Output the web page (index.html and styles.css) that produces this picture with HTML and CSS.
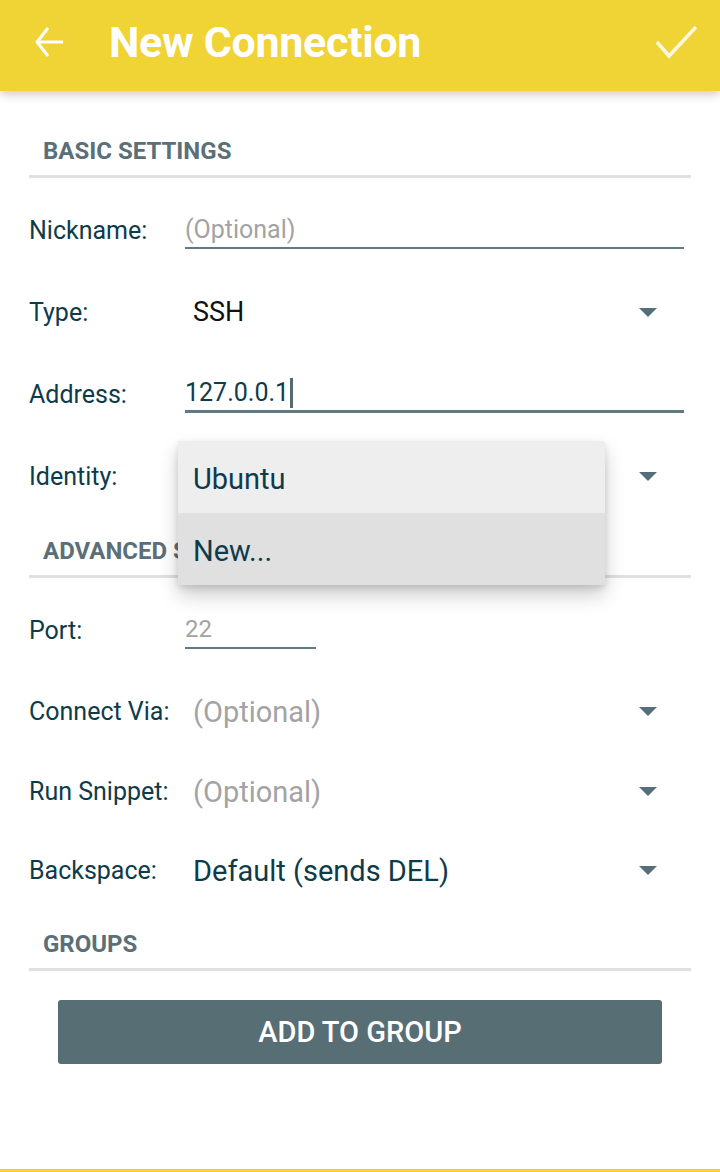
FILE: index.html
```html
<!DOCTYPE html>
<html>
<head>
<meta charset="utf-8">
<link rel="stylesheet" href="styles.css">
</head>
<body>
<div class="screen">
  <header class="appbar">
    <svg class="back" width="36" height="36" viewBox="0 0 36 36">
      <path d="M15 5 L4 19 L15 33 M4 19 L30 19" fill="none" stroke="#fff" stroke-width="3"/>
    </svg>
    <h1 class="title">New Connection</h1>
    <svg class="check" width="46" height="36" viewBox="0 0 46 36">
      <path d="M3 16 L15 30 L42 1" fill="none" stroke="rgba(255,255,255,0.85)" stroke-width="3.5"/>
    </svg>
  </header>

  <main class="content">
    <section class="section">
      <h2 class="section-title">BASIC SETTINGS</h2>
      <div class="row">
        <span class="label">Nickname:</span>
        <div class="input"><span class="placeholder">(Optional)</span></div>
      </div>
      <div class="row">
        <span class="label">Type:</span>
        <div class="spinner"><span class="value black">SSH</span><span class="caret"></span></div>
      </div>
      <div class="row">
        <span class="label">Address:</span>
        <div class="input focused"><span class="text">127.0.0.1</span><span class="cursor"></span></div>
      </div>
      <div class="row identity">
        <span class="label">Identity:</span>
        <div class="spinner"><span class="value"></span><span class="caret"></span></div>
        <div class="popup">
          <div class="popup-item">Ubuntu</div>
          <div class="popup-item selected">New...</div>
        </div>
      </div>
    </section>

    <section class="section">
      <h2 class="section-title">ADVANCED SETTINGS</h2>
      <div class="row r82">
        <span class="label">Port:</span>
        <div class="input short"><span class="placeholder small">22</span></div>
      </div>
      <div class="row r81">
        <span class="label">Connect Via:</span>
        <div class="spinner"><span class="value grey">(Optional)</span><span class="caret"></span></div>
      </div>
      <div class="row r79">
        <span class="label">Run Snippet:</span>
        <div class="spinner"><span class="value grey">(Optional)</span><span class="caret"></span></div>
      </div>
      <div class="row r79">
        <span class="label">Backspace:</span>
        <div class="spinner"><span class="value">Default (sends DEL)</span><span class="caret"></span></div>
      </div>
    </section>

    <section class="section">
      <h2 class="section-title">GROUPS</h2>
      <div class="btn-wrap"><button class="btn">ADD TO GROUP</button></div>
    </section>
  </main>
  <div class="bottom-line"></div>
</div>
</body>
</html>
```

FILE: styles.css
```css
* { box-sizing: border-box; }
html, body { margin: 0; padding: 0; background: #fff; }
body { font-family: Roboto, "Noto Sans", sans-serif; }

.screen {
  width: 720px;
  height: 1172px;
  display: flex;
  flex-direction: column;
  overflow: hidden;
}

.appbar {
  height: 91px;
  flex: none;
  background: #f0d334;
  display: flex;
  align-items: center;
  padding: 0 20px 0 33px;
  box-shadow: 0 3px 10px rgba(0,0,0,0.22);
  position: relative;
  z-index: 2;
}
.back { flex: none; margin-top: -10px; }
.title {
  margin: -8px 0 0 40px;
  flex: 1;
  color: #fff;
  font-size: 43px;
  font-weight: 700;
  letter-spacing: -0.3px;
}
.check { flex: none; margin-top: -4px; }

.content {
  flex: 1;
  padding: 40px 29px 0 29px;
}

.section-title {
  margin: 0;
  padding: 0 0 4px 14px;
  height: 47px;
  line-height: 40px;
  font-size: 24px;
  font-weight: 700;
  color: #5a6f77;
  border-bottom: 3px solid #e0e0e0;
}

.section + .section { margin-top: 14px; }

.row {
  height: 82px;
  display: flex;
  align-items: center;
  position: relative;
}
.row.r82 { height: 82px; }
.row.r81 { height: 81px; }
.row.r79 { height: 79px; }
.section .row:first-of-type { margin-top: 11px; }

.label {
  width: 156px;
  flex: none;
  font-size: 25px;
  color: #0e3b49;
}

.input {
  flex: 1;
  margin-right: 7px;
  height: 37px;
  border-bottom: 2px solid #617980;
  display: flex;
  align-items: center;
  font-size: 25px;
}
.input.focused { border-bottom-width: 3px; height: 38px; }
.input.short { flex: none; width: 131px; }
.placeholder { color: #a3a3a3; }
.placeholder.small { font-size: 24px; }
.text { color: #0e3b49; }
.cursor {
  display: inline-block;
  width: 3px;
  height: 30px;
  background: #546a71;
  margin-left: 1px;
}

.spinner {
  flex: 1;
  display: flex;
  align-items: center;
  padding-left: 8px;
  padding-right: 34px;
}
.value {
  flex: 1;
  font-size: 29px;
  color: #0e3b49;
}
.value.black { color: #111; font-size: 27px; }
.value.grey { color: #a3a3a3; }
.caret {
  width: 0;
  height: 0;
  border-left: 9px solid transparent;
  border-right: 9px solid transparent;
  border-top: 9px solid #546e7a;
}

.popup {
  position: absolute;
  left: 149px;
  top: 6px;
  width: 427px;
  background: #eeeeee;
  border-radius: 2px;
  box-shadow: 0 10px 20px rgba(0,0,0,0.2), 0 3px 6px rgba(0,0,0,0.12);
  z-index: 5;
}
.popup-item {
  height: 72px;
  display: flex;
  align-items: center;
  padding: 4px 0 0 15px;
  font-size: 29px;
  color: #0e3b49;
}
.popup-item.selected { background: #e0e0e0; }

.btn-wrap {
  display: flex;
  justify-content: center;
  padding-top: 29px;
}
.btn {
  width: 604px;
  height: 64px;
  border: none;
  border-radius: 3px;
  background: #586e75;
  color: #fff;
  font-family: Roboto, sans-serif;
  font-size: 29px;
  font-weight: 500;
}

.bottom-line {
  height: 3px;
  flex: none;
  background: #f0d334;
}
```
